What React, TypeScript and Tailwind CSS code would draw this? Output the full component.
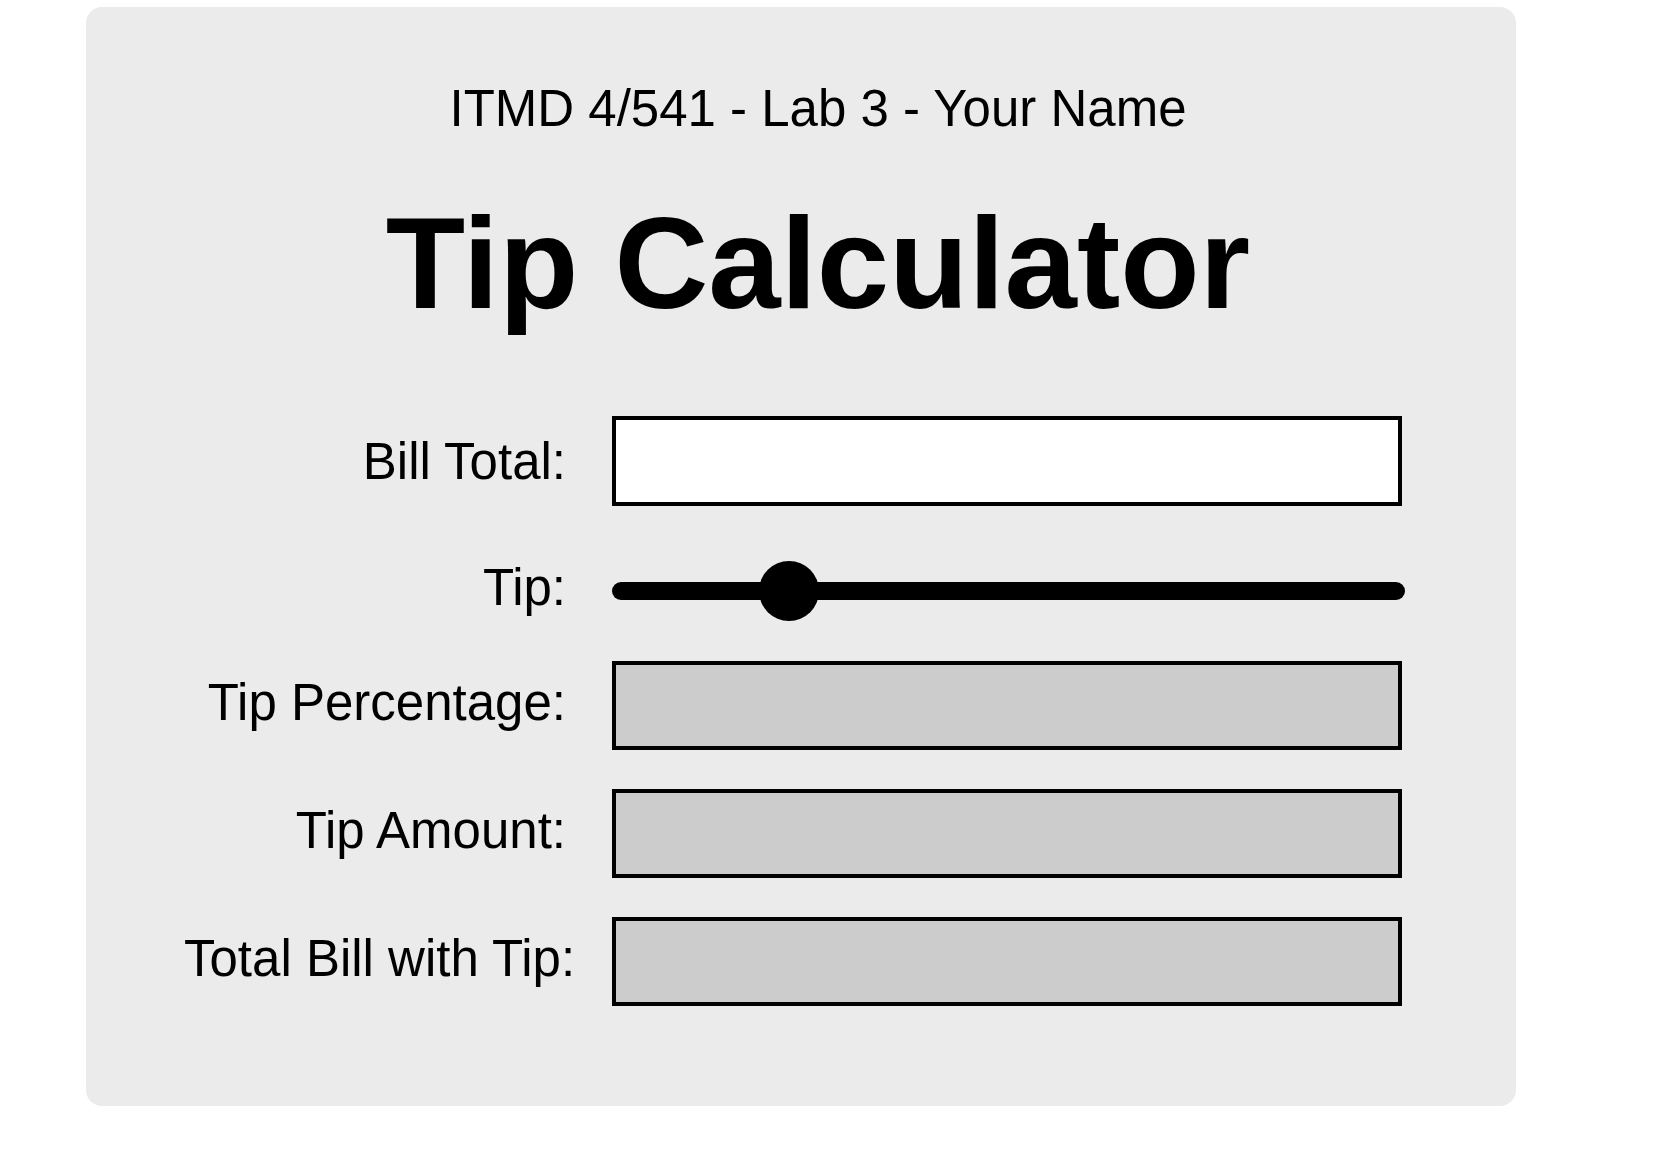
import { useState } from "react";

const rows = [
  { label: "Tip Percentage:" },
  { label: "Tip Amount:" },
  { label: "Total Bill with Tip:" },
];

export default function App() {
  const [bill, setBill] = useState("");
  const [tip, setTip] = useState(20);

  return (
    <div className="min-h-screen bg-white pt-[7px] pl-[86px] font-['Liberation_Sans',Arial,sans-serif] text-black">
      <div className="w-[1430px] h-[1099px] rounded-[16px] bg-[#ebebeb] pt-[76px] pl-[98px] pr-[64px]">
        <p className="text-center text-[51px] leading-none">
          ITMD 4/541 - Lab 3 - Your Name
        </p>

        <h1 className="mt-[64px] text-center text-[130px] font-bold leading-none">
          Tip Calculator
        </h1>

        <form className="mt-[88px] flex flex-col">
          {/* bill */}
          <div className="flex items-center gap-[46px]">
            <label className="w-[382px] shrink-0 whitespace-nowrap text-right text-[51px] leading-none">
              Bill Total:
            </label>
            <input
              type="text"
              value={bill}
              onChange={(e) => setBill(e.target.value)}
              className="h-[90px] w-[790px] border-[4px] border-black bg-white px-3 text-[40px] outline-none"
            />
          </div>

          {/* slider */}
          <div className="mt-[55px] flex h-[60px] items-center gap-[46px]">
            <label className="w-[382px] shrink-0 whitespace-nowrap pb-[8px] text-right text-[51px] leading-none">
              Tip:
            </label>
            <input
              type="range"
              min={0}
              max={100}
              value={tip}
              onChange={(e) => setTip(Number(e.target.value))}
              className="h-[18px] w-[793px] cursor-pointer appearance-none rounded-full bg-black outline-none [&::-webkit-slider-thumb]:h-[60px] [&::-webkit-slider-thumb]:w-[60px] [&::-webkit-slider-thumb]:appearance-none [&::-webkit-slider-thumb]:rounded-full [&::-webkit-slider-thumb]:bg-black [&::-moz-range-thumb]:h-[60px] [&::-moz-range-thumb]:w-[60px] [&::-moz-range-thumb]:rounded-full [&::-moz-range-thumb]:border-0 [&::-moz-range-thumb]:bg-black"
            />
          </div>

          {rows.map((row, i) => (
            <div
              key={row.label}
              className={
                i === 0
                  ? "mt-[40px] flex items-center gap-[46px]"
                  : "mt-[39px] flex items-center gap-[46px]"
              }
            >
              <label className="w-[382px] shrink-0 whitespace-nowrap pb-[6px] text-right text-[51px] leading-none">
                {row.label}
              </label>
              <input
                type="text"
                readOnly
                className="h-[89px] w-[790px] border-[4px] border-black bg-[#cccccc] px-3 text-[40px] outline-none"
              />
            </div>
          ))}
        </form>
      </div>
    </div>
  );
}
